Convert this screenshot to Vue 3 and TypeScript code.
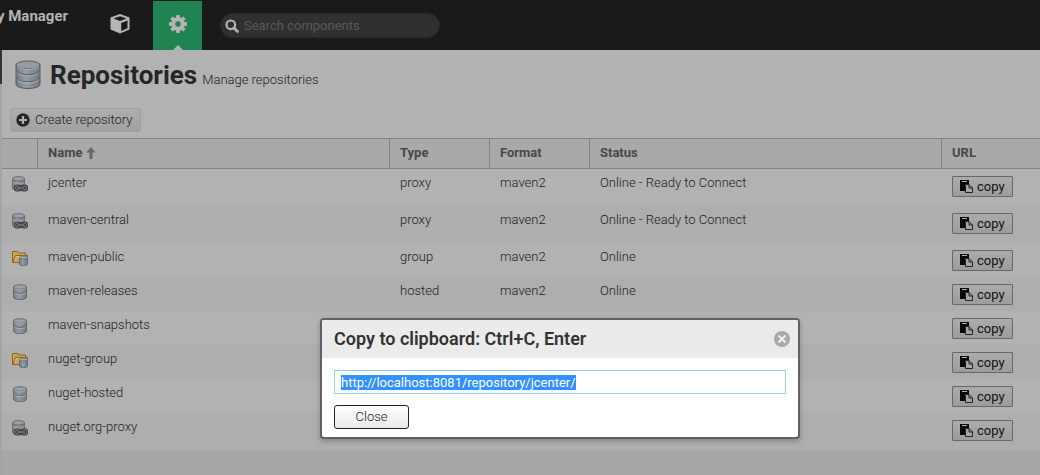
<script setup lang="ts">
import { onMounted, ref } from 'vue'

type Kind = 'proxy' | 'group' | 'hosted'
interface Repository {
  name: string
  type: Kind
  format: string
  status: string
}

const repositories: Repository[] = [
  { name: 'jcenter', type: 'proxy', format: 'maven2', status: 'Online - Ready to Connect' },
  { name: 'maven-central', type: 'proxy', format: 'maven2', status: 'Online - Ready to Connect' },
  { name: 'maven-public', type: 'group', format: 'maven2', status: 'Online' },
  { name: 'maven-releases', type: 'hosted', format: 'maven2', status: 'Online' },
  { name: 'maven-snapshots', type: 'hosted', format: '', status: '' },
  { name: 'nuget-group', type: 'group', format: '', status: '' },
  { name: 'nuget-hosted', type: 'hosted', format: '', status: '' },
  { name: 'nuget.org-proxy', type: 'proxy', format: '', status: '' },
]

const url = ref('http://localhost:8081/repository/jcenter/')
const search = ref('')
const urlField = ref<HTMLInputElement | null>(null)
const teeth = [0, 45, 90, 135, 180, 225, 270, 315]

onMounted(() => {
  urlField.value?.focus()
  urlField.value?.select()
})
</script>

<template>
  <div class="app">
    <svg class="defs" aria-hidden="true">
      <defs>
        <linearGradient id="metal" x1="0" x2="1" y1="0" y2="0">
          <stop offset="0" stop-color="#747a82" />
          <stop offset=".4" stop-color="#969ca4" />
          <stop offset="1" stop-color="#737981" />
        </linearGradient>
      </defs>
    </svg>

    <header class="topbar">
      <div class="brand">y Manager</div>
      <button class="mode" type="button" aria-label="Browse">
        <svg width="20" height="20" viewBox="0 0 20 20">
          <path d="M10 0 19.500 3.500V15.500L10 19.500.5 15.500V3.500Z" fill="#b4b4b4" />
          <path d="M10 2.200 16.500 4.500 10 7 3.500 4.500Z" fill="#1a1a1a" />
          <path d="M11.200 9 17.500 6.500V14.200L11.200 17Z" fill="#1a1a1a" />
        </svg>
      </button>
      <button class="mode active" type="button" aria-label="Administration">
        <svg width="20" height="20" viewBox="-10 -10 20 20">
          <g fill="#b4b4b4">
            <rect v-for="a in teeth" :key="a" x="-2" y="-9" width="4" height="5" rx="1" :transform="`rotate(${a})`" />
            <path fill-rule="evenodd" d="M0-6.700A6.700 6.700 0 1 1 0 6.700 6.700 6.700 0 0 1 0-6.700ZM0-2.800A2.800 2.800 0 1 0 0 2.800 2.800 2.800 0 0 0 0-2.800Z" />
          </g>
        </svg>
      </button>
      <label class="search">
        <svg width="14" height="14" viewBox="0 0 14 14" fill="none" stroke="#b4b4b4">
          <circle cx="5.800" cy="5.800" r="4.300" stroke-width="2.200" />
          <path d="m9 9 3.500 3.500" stroke-width="2.800" stroke-linecap="round" />
        </svg>
        <input v-model="search" type="text" placeholder="Search components" aria-label="Search components">
      </label>
    </header>

    <div class="body">
      <div class="rail"><div class="rail-head"></div></div>
      <main class="content">
        <div class="title">
          <svg width="26" height="30" viewBox="0 0 26 30" stroke="#555b62">
            <path d="M1 5v19c0 6 24 6 24 0V5Z" fill="url(#metal)" />
            <ellipse cx="13" cy="5" rx="12" ry="4" fill="#969ca3" />
            <path d="M1.500 11c1 5 22 5 23 0M1.500 18c1 5 22 5 23 0" fill="none" />
            <path d="M2 12.500c2 4.500 20 4.500 22 0M2 19.500c2 4.500 20 4.500 22 0M2 6.500c2 4 20 4 22 0" fill="none" stroke="#b1b5ba" />
          </svg>
          <h1>Repositories</h1>
          <span class="subtitle">Manage repositories</span>
        </div>

        <div class="toolbar">
          <button class="create" type="button">
            <svg width="14" height="14" viewBox="0 0 14 14">
              <circle cx="7" cy="7" r="6.700" fill="#262626" />
              <path d="M7 3v8M3 7h8" stroke="#b0b0b0" stroke-width="2.200" />
            </svg>
            Create repository
          </button>
        </div>

        <table class="grid">
          <colgroup>
            <col class="c-icon"><col class="c-wide"><col class="c-small"><col class="c-small"><col class="c-wide"><col>
          </colgroup>
          <thead>
            <tr>
              <th></th>
              <th>
                Name
                <svg class="sort" width="10" height="12" viewBox="0 0 10 12">
                  <path d="M5 0 9.800 5.500H6.500V12H3.500V5.500H.2Z" fill="#686868" />
                </svg>
              </th>
              <th>Type</th>
              <th>Format</th>
              <th>Status</th>
              <th>URL</th>
            </tr>
          </thead>
          <tbody>
            <tr v-for="r in repositories" :key="r.name" :class="r.type">
              <td class="icon">
                <svg v-if="r.type === 'hosted'" width="16" height="16" viewBox="0 0 16 16" stroke="#666c73">
                  <path d="M1.500 3v10c0 3.500 13 3.500 13 0V3Z" fill="url(#metal)" />
                  <ellipse cx="8" cy="3" rx="6.500" ry="2.300" fill="#9ca1a8" />
                  <path d="M2 7.500c1 2.500 11 2.500 12 0" fill="none" />
                  <path d="M2.500 9c1 2 10 2 11 0M2.500 4.500c1 1.800 10 1.800 11 0" fill="none" stroke="#acb0b6" />
                </svg>
                <svg v-else-if="r.type === 'proxy'" width="16" height="16" viewBox="0 0 16 16">
                  <g stroke="#666c73">
                    <path d="M.5 3v9c0 3.500 12 3.500 12 0V3Z" fill="url(#metal)" />
                    <ellipse cx="6.500" cy="2.800" rx="6" ry="2.200" fill="#9ca1a8" />
                    <path d="M1 6.500c1 2.500 10 2.500 11 0" fill="none" stroke="#acb0b6" />
                  </g>
                  <g fill="none">
                    <rect x="3.500" y="10" width="4.500" height="4" rx="1.500" stroke="#3a3a3a" stroke-width="3" />
                    <rect x="10" y="10" width="4.500" height="4" rx="1.500" stroke="#3a3a3a" stroke-width="3" />
                    <rect x="3.500" y="10" width="4.500" height="4" rx="1.500" stroke="#8a8a8a" />
                    <rect x="10" y="10" width="4.500" height="4" rx="1.500" stroke="#8a8a8a" />
                    <path d="M6 12h6" stroke="#3a3a3a" stroke-width="3" />
                    <path d="M6 12h6" stroke="#9a9a9a" />
                  </g>
                </svg>
                <svg v-else width="16" height="16" viewBox="0 0 16 16">
                  <path d="M.5 12.500V1.500h5l1 1.500h7v2.500h2v6l-2 1Z" fill="#c7a85b" stroke="#946018" />
                  <path d="m.8 12.300 2.700-6.800h12" fill="none" stroke="#946018" />
                  <path d="m3 10 1.500-3.500H14" fill="none" stroke="#d9c07a" />
                  <path d="M7.500 7.500V14c0 2 8 2 8 0V7.500Z" fill="url(#metal)" stroke="#666c73" />
                  <ellipse cx="11.500" cy="7.500" rx="4" ry="1.500" fill="#a4a9af" stroke="#70767e" />
                </svg>
              </td>
              <td>{{ r.name }}</td>
              <td>{{ r.type }}</td>
              <td>{{ r.format }}</td>
              <td>{{ r.status }}</td>
              <td class="url">
                <button class="copy" type="button">
                  <svg width="13" height="13" viewBox="0 0 13 13">
                    <path d="M0 0h9v4H5v7H0Z" fill="#080808" />
                    <path d="M2 1.500h5" stroke="#b0b0b0" />
                    <path d="M5.500 4.500H9l3.500 3.500v4.500h-7Z" fill="#a4a4a4" stroke="#222" />
                    <path d="M9 4.500v3.500h3.500" fill="none" stroke="#222" />
                  </svg>
                  copy
                </button>
              </td>
            </tr>
          </tbody>
        </table>
      </main>
    </div>

    <section class="dialog" role="dialog" aria-labelledby="dialog-title">
      <div class="dialog-head">
        <h2 id="dialog-title">Copy to clipboard: Ctrl+C, Enter</h2>
        <button class="dismiss" type="button" aria-label="Dismiss">
          <svg width="16" height="16" viewBox="0 0 16 16">
            <circle cx="8" cy="8" r="8" fill="#a9a9a9" />
            <path d="m4.500 4.500 7 7M11.500 4.500l-7 7" stroke="#ededed" stroke-width="2.200" />
          </svg>
        </button>
      </div>
      <div class="dialog-body">
        <input ref="urlField" v-model="url" class="field" type="text" aria-labelledby="dialog-title">
        <button class="close" type="button">Close</button>
      </div>
    </section>
  </div>
</template>

<style>
body {
  margin: 0;
  background: #a7a7a7;
}
</style>

<style scoped>
.app {
  position: relative;
  display: flex;
  flex-direction: column;
  min-height: 100vh;
  overflow: hidden;
  font: 300 13px/16px Roboto, "Liberation Sans", sans-serif;
  color: #1c1c1c;
}
.app * {
  box-sizing: border-box;
}
.defs {
  position: absolute;
  width: 0;
  height: 0;
}
svg {
  display: block;
  flex: none;
}
button,
input {
  font: inherit;
  color: inherit;
}
button {
  display: flex;
  align-items: center;
  padding: 0;
  border: 0;
  background: none;
}
.topbar {
  display: flex;
  height: 50px;
  padding-top: 1px;
  background: #1a1a1a;
}
.brand {
  display: flex;
  justify-content: flex-end;
  width: 68px;
  margin-right: 18px;
  padding-top: 7px;
  white-space: nowrap;
  font-size: 15px;
  font-weight: 700;
  color: #b3b3b3;
}
.mode {
  position: relative;
  justify-content: center;
  width: 67px;
  padding-bottom: 3px;
}
.mode.active {
  width: 49px;
  background: #208452;
}
.mode.active::after {
  content: "";
  position: absolute;
  bottom: 0;
  border: 5px solid transparent;
  border-top: 0;
  border-bottom-color: #b2b2b2;
}
.search {
  display: flex;
  align-items: center;
  gap: 5px;
  width: 220px;
  height: 25px;
  margin: 12px 0 0 18px;
  padding: 0 4px;
  border: 1px solid #292929;
  border-radius: 13px;
  background: #303030;
}
.search input {
  flex: 1;
  min-width: 0;
  padding: 0;
  border: 0;
  outline: 0;
  background: none;
  font-weight: 400;
  color: #b3b3b3;
}
.search input::placeholder {
  color: #595959;
  opacity: 1;
}
.body {
  display: flex;
  flex: 1;
}
.rail {
  width: 2px;
  background: #a4a4a4;
}
.rail-head {
  height: 34px;
  background: #333;
}
.content {
  flex: 1;
  min-width: 0;
}
.title {
  display: flex;
  align-items: baseline;
  height: 54px;
  padding: 10px 13px 0;
  background: #b2b2b2;
}
.title svg {
  align-self: flex-start;
}
h1 {
  margin: 0 5px 0 9px;
  font-size: 26px;
  line-height: 30px;
  color: #262626;
}
.toolbar {
  padding: 4px 8px 6px;
  background: #b2b2b2;
}
.create {
  gap: 5px;
  height: 24px;
  padding: 0 8px 0 5px;
  border: 1px solid #a0a0a0;
  border-radius: 3px;
  background: linear-gradient(#aeaeae, #a1a1a1);
}
.grid {
  width: 100%;
  table-layout: fixed;
  border-spacing: 0;
}
.c-icon {
  width: 36px;
}
.c-wide {
  width: 352px;
}
.c-small {
  width: 100px;
}
th,
td {
  text-align: left;
}
th {
  height: 31px;
  padding: 0 10px 2px;
  border: solid #838383;
  border-width: 1px 1px 1px 0;
  background: #a9a9a9;
  font-weight: 700;
  color: #484848;
}
th:last-child {
  border-right: 0;
}
.sort {
  display: inline-block;
  vertical-align: -2px;
}
td {
  height: 34px;
  padding: 6px 10px 0;
  vertical-align: top;
  background: #b2b2b2;
}
.proxy td {
  height: 37px;
}
tr:nth-child(even) td {
  background: #aeaeae;
}
.icon {
  padding: 7px 10px 0;
}
.url {
  padding-top: 7px;
}
.copy {
  gap: 4px;
  height: 21px;
  padding: 0 7px;
  border: 1px solid #686868;
  border-radius: 1px;
  background: linear-gradient(#ababab, #9c9c9c);
  font-weight: 400;
  color: #111;
}
.dialog {
  position: absolute;
  top: 318px;
  left: 320px;
  width: 480px;
  border: 2px solid #616161;
  border-radius: 4px;
  background: #fff;
  box-shadow: 0 2px 5px rgba(0, 0, 0, .25);
}
.dialog-head {
  display: flex;
  align-items: center;
  justify-content: space-between;
  height: 38px;
  padding: 0 8px 0 12px;
  border-radius: 2px 2px 0 0;
  background: #ebebeb;
}
h2 {
  margin: 0;
  font-size: 18px;
  font-weight: 600;
  line-height: 20px;
  color: #333;
}
.dialog-body {
  display: flex;
  flex-direction: column;
  align-items: flex-start;
  gap: 11px;
  padding: 12px 12px 8px;
}
.field {
  width: 100%;
  height: 24px;
  padding: 0 6px;
  border: 1px solid #99c9ef;
  outline: 0;
  background: #fff;
  font-weight: 400;
}
.field::selection {
  background: #3390ff;
  color: #fff;
}
.close {
  justify-content: center;
  width: 75px;
  height: 24px;
  border: 1px solid #222;
  border-radius: 3px;
  background: linear-gradient(#fff, #e8e8e8);
}
</style>
